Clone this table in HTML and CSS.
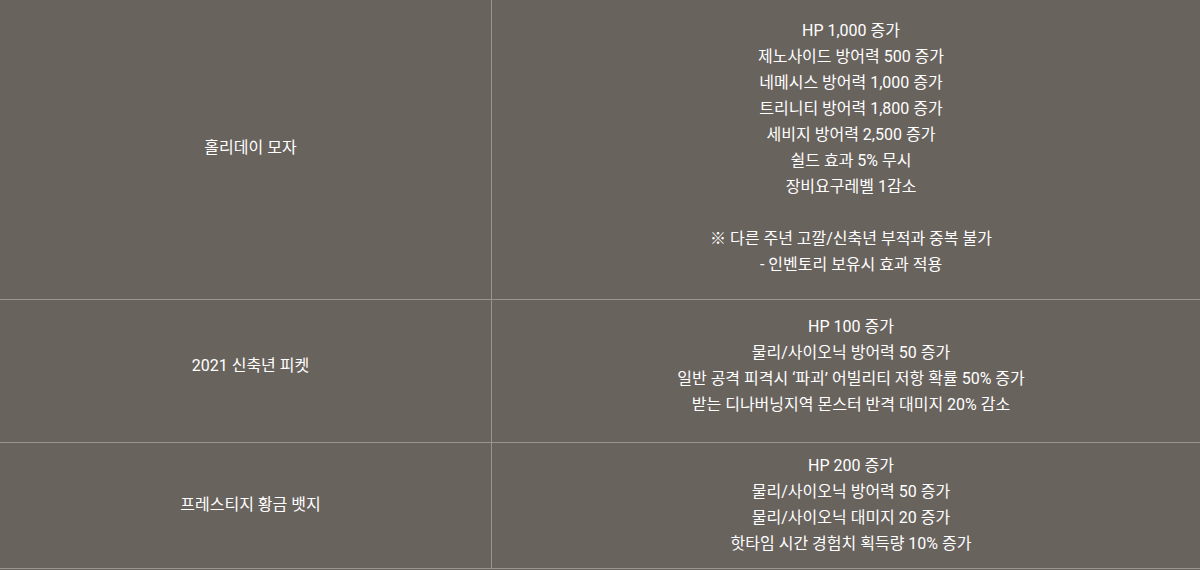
FILE: index.html
```html
<!DOCTYPE html>
<html lang="ko">
<head>
<meta charset="utf-8">
<title>아이템 효과</title>
<link rel="stylesheet" href="styles.css">
</head>
<body>
<table class="spec">
  <colgroup>
    <col class="spec__col-name">
    <col class="spec__col-effect">
  </colgroup>
  <tbody>
    <tr class="spec__row spec__row--holiday">
      <td class="spec__name">홀리데이 모자</td>
      <td class="spec__effect">HP 1,000 증가<br>제노사이드 방어력 500 증가<br>네메시스 방어력 1,000 증가<br>트리니티 방어력 1,800 증가<br>세비지 방어력 2,500 증가<br>쉴드 효과 5% 무시<br>장비요구레벨 1감소<br><br>※ 다른 주년 고깔/신축년 부적과 중복 불가<br>- 인벤토리 보유시 효과 적용</td>
    </tr>
    <tr class="spec__row spec__row--picket">
      <td class="spec__name">2021 신축년 피켓</td>
      <td class="spec__effect">HP 100 증가<br>물리/사이오닉 방어력 50 증가<br>일반 공격 피격시 ‘파괴’ 어빌리티 저항 확률 50% 증가<br>받는 디나버닝지역 몬스터 반격 대미지 20% 감소</td>
    </tr>
    <tr class="spec__row spec__row--badge">
      <td class="spec__name">프레스티지 황금 뱃지</td>
      <td class="spec__effect">HP 200 증가<br>물리/사이오닉 방어력 50 증가<br>물리/사이오닉 대미지 20 증가<br>핫타임 시간 경험치 획득량 10% 증가</td>
    </tr>
  </tbody>
</table>
</body>
</html>
```
FILE: styles.css
```css
html, body {
  margin: 0;
  padding: 0;
  background: #69635e;
}

.spec {
  width: 1200px;
  border-collapse: separate;
  border-spacing: 0;
  table-layout: fixed;
  font-family: Roboto, "Noto Sans CJK KR", sans-serif;
  font-size: 16px;
  line-height: 26px;
  color: #ffffff;
}

.spec__col-name {
  width: 492px;
}

.spec__name,
.spec__effect {
  padding: 18px 0 21px 10px;
  text-align: center;
  vertical-align: middle;
  border-bottom: 1px solid #9b958f;
}

.spec__name {
  border-right: 1px solid #9b958f;
}

.spec__row--picket .spec__name,
.spec__row--picket .spec__effect {
  padding-top: 14px;
  padding-bottom: 24px;
}

.spec__row--badge .spec__name,
.spec__row--badge .spec__effect {
  padding-top: 10px;
  padding-bottom: 11px;
}
```
